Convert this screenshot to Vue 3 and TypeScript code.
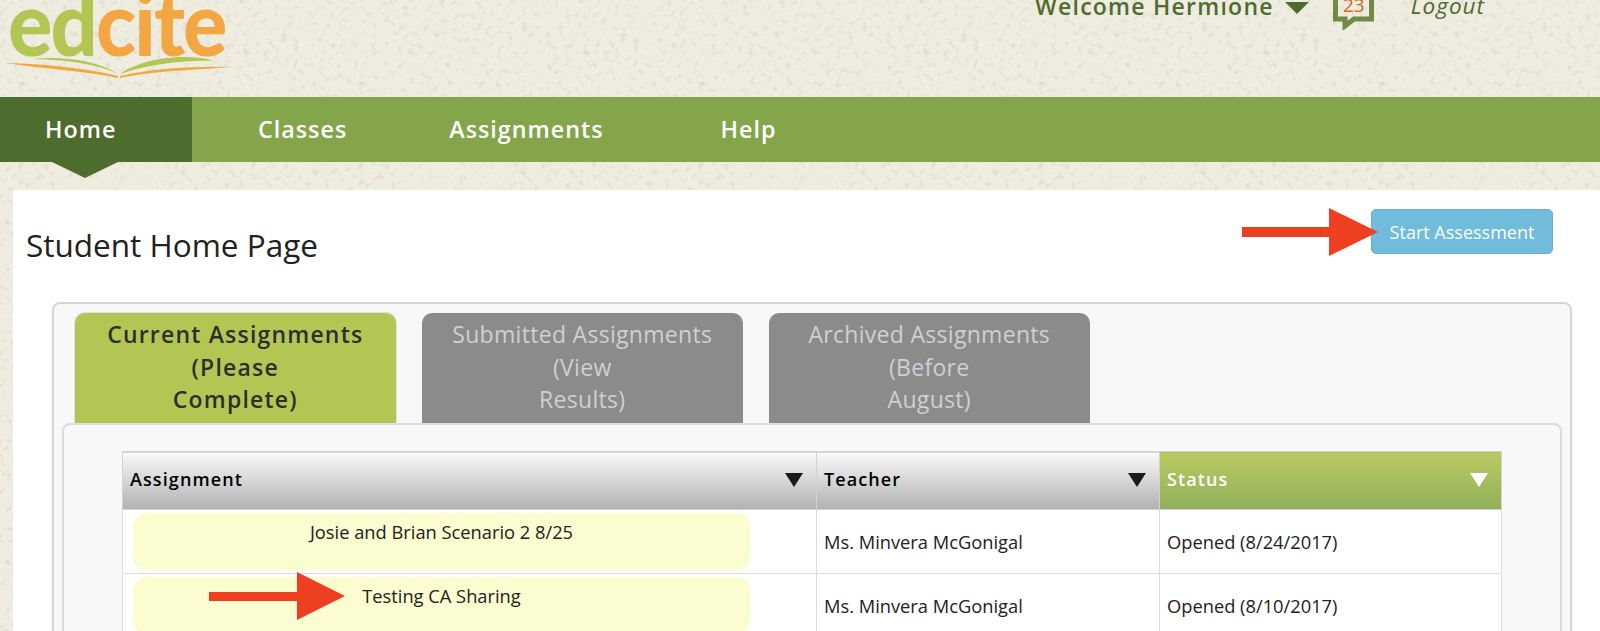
<script setup lang="ts">
interface Row {
  name: string
  teacher: string
  status: string
}

const tabs = [
  { lines: ['Current Assignments', '(Please', 'Complete)'], active: true },
  { lines: ['Submitted Assignments', '(View', 'Results)'], active: false },
  { lines: ['Archived Assignments', '(Before', 'August)'], active: false }
]

const navItems = ['Classes', 'Assignments', 'Help']

const rows: Row[] = [
  { name: 'Josie and Brian Scenario 2 8/25', teacher: 'Ms. Minvera McGonigal', status: 'Opened (8/24/2017)' },
  { name: 'Testing CA Sharing', teacher: 'Ms. Minvera McGonigal', status: 'Opened (8/10/2017)' }
]
</script>

<template>
  <div class="page">
    <header class="top">
      <div class="logo">
        <div class="logo-word"><span class="ed">ed</span><span class="cite">cite</span></div>
        <svg class="logo-book" width="240" height="24" viewBox="0 0 240 24">
          <path d="M118 18 C100 9 70 4 33 3 C60 0 97 4 118 18 Z" fill="#b3c653" />
          <path d="M120 18 C135 7 160 1 185 1 C195 1 205 2 214 5 C185 4 150 8 120 18 Z" fill="#b3c653" />
          <path d="M5 7 C50 8 90 13 118 20 V22 C85 15 45 13 5 7 Z" fill="#f3a742" />
          <path d="M120 20 C150 13 190 10 232 11 C195 14 150 15 120 22 Z" fill="#f3a742" />
        </svg>
      </div>
      <div class="user">
        <span class="welcome">Welcome Hermione</span>
        <span class="caret"></span>
        <svg class="bubble" width="41" height="30" viewBox="0 0 41 30">
          <path d="M2.5 -4 V19 H12 V26 L21 19 H38.5 V-4" fill="none" stroke="#6f8b45" stroke-width="5" />
        </svg>
        <span class="count">23</span>
        <span class="logout">Logout</span>
      </div>
    </header>

    <nav class="nav">
      <a class="nav-item home">Home</a>
      <a v-for="item in navItems" :key="item" class="nav-item" :class="item.toLowerCase()">{{ item }}</a>
    </nav>

    <main class="card">
      <div class="title-row">
        <h1>Student Home Page</h1>
        <button class="start">Start Assessment</button>
        <svg class="arrow arrow-start" width="136" height="48" viewBox="0 0 136 48">
          <path d="M0 19 H87 V0 L136 24 L87 48 V29 H0 Z" fill="#ee3f23" />
        </svg>
      </div>

      <section class="panel">
        <div class="tabs">
          <div v-for="tab in tabs" :key="tab.lines[0]" class="tab" :class="{ active: tab.active }">
            <div v-for="line in tab.lines" :key="line">{{ line }}</div>
          </div>
        </div>
        <div class="inner">
          <table class="grid">
            <colgroup>
              <col class="c1" />
              <col class="c2" />
              <col class="c3" />
            </colgroup>
            <thead>
              <tr>
                <th><span>Assignment</span><i class="sort"></i></th>
                <th><span>Teacher</span><i class="sort"></i></th>
                <th class="sorted"><span>Status</span><i class="sort"></i></th>
              </tr>
            </thead>
            <tbody>
              <tr v-for="(row, i) in rows" :key="row.name">
                <td class="name-cell">
                  <div class="pill">{{ row.name }}</div>
                  <svg v-if="i === 1" class="arrow arrow-row" width="136" height="48" viewBox="0 0 136 48">
                    <path d="M0 20 H88 V0 L136 24 L88 48 V29 H0 Z" fill="#ee3f23" />
                  </svg>
                </td>
                <td>{{ row.teacher }}</td>
                <td>{{ row.status }}</td>
              </tr>
            </tbody>
          </table>
        </div>
      </section>
    </main>
  </div>
</template>

<style>
html,
body {
  margin: 0;
  height: 100%;
  overflow: hidden;
}
</style>

<style scoped>
.page {
  height: 631px;
  overflow: hidden;
  font-family: "Open Sans", "Liberation Sans", sans-serif;
  color: #222;
  background-color: #efece0;
  background-image: url("data:image/svg+xml,%3Csvg xmlns='http://www.w3.org/2000/svg' width='340' height='340'%3E%3Cfilter id='n'%3E%3CfeTurbulence type='fractalNoise' baseFrequency='.16' numOctaves='4' seed='7'/%3E%3CfeColorMatrix values='0 0 0 0 .55 0 0 0 0 .53 0 0 0 0 .44 1.2 0 0 0 -.66'/%3E%3C/filter%3E%3Crect width='340' height='340' filter='url(%23n)'/%3E%3C/svg%3E");
}

.top {
  height: 97px;
  display: flex;
  justify-content: space-between;
  overflow: hidden;
}

.logo {
  position: relative;
  width: 240px;
  padding-left: 8px;
}

.logo-word {
  height: 56px;
  font-family: Lato, "Open Sans", sans-serif;
  font-weight: 900;
  font-size: 90px;
  line-height: 42px;
  letter-spacing: -2px;
  white-space: nowrap;
  transform: scaleX(0.92);
  transform-origin: left;
}

.ed {
  color: #b3c653;
}

.cite {
  color: #f3a742;
}

.logo-book {
  display: block;
  margin-left: -8px;
}

.user {
  position: relative;
  display: flex;
  align-items: flex-start;
  width: 565px;
  color: #4e6c2e;
}

.welcome {
  margin-top: -10px;
  font-size: 23px;
  line-height: 32px;
  font-weight: 600;
  letter-spacing: 1.25px;
  white-space: nowrap;
}

.caret {
  margin: 2px 0 0 11px;
  border-left: 12px solid transparent;
  border-right: 12px solid transparent;
  border-top: 12px solid #4e6c2e;
}

.bubble {
  margin-left: 24px;
}

.count {
  position: absolute;
  left: 308px;
  top: -5px;
  font-size: 19px;
  line-height: 20px;
  color: #d2691e;
}

.logout {
  margin: -10px 0 0 37px;
  font-size: 22.5px;
  line-height: 32px;
  font-style: italic;
  font-weight: 500;
  letter-spacing: 1px;
}

.nav {
  height: 65px;
  display: flex;
  background: #84a54a;
}

.nav-item {
  height: 65px;
  line-height: 65px;
  color: #fff;
  font-size: 23.3px;
  font-weight: 600;
  letter-spacing: 1px;
}

.home {
  position: relative;
  width: 192px;
  padding-left: 45px;
  box-sizing: border-box;
  background: #4e6c2e;
}

.home::after {
  content: "";
  position: absolute;
  left: 52px;
  top: 65px;
  border-left: 33px solid transparent;
  border-right: 33px solid transparent;
  border-top: 16px solid #4e6c2e;
}

.classes {
  margin-left: 66px;
}

.assignments {
  margin-left: 102px;
}

.help {
  margin-left: 117px;
}

.card {
  margin: 28px 0 0 13px;
  height: 441px;
  background: #fff;
  border-radius: 4px 0 0 0;
}

.title-row {
  position: relative;
  height: 112px;
}

h1 {
  margin: 0;
  padding: 33px 0 0 13px;
  font-size: 31.5px;
  line-height: 44px;
  font-weight: 400;
  color: #222;
}

.start {
  position: absolute;
  left: 1358px;
  top: 19px;
  width: 182px;
  height: 45px;
  padding: 0;
  background: #71bbdb;
  border: 1px solid #66b0d0;
  border-radius: 5px;
  color: #fff;
  font-family: inherit;
  font-size: 18px;
}

.arrow {
  position: absolute;
}

.arrow-start {
  left: 1229px;
  top: 18px;
}

.panel {
  margin-left: 39px;
  width: 1520px;
  height: 341px;
  box-sizing: border-box;
  border: 2px solid #d6d6d6;
  border-bottom: 0;
  border-radius: 8px 8px 0 0;
  background: #f8f8f8;
}

.tabs {
  display: flex;
  gap: 26.5px;
  height: 119px;
  padding: 9px 0 0 21px;
  box-sizing: border-box;
}

.tab {
  width: 320.5px;
  height: 110px;
  padding-top: 5px;
  box-sizing: border-box;
  border-radius: 10px 10px 0 0;
  background: #8b8b89;
  color: #d0d0d0;
  text-align: center;
  font-size: 23px;
  line-height: 32.5px;
  letter-spacing: 0.3px;
}

.tab.active {
  background: #b3c653;
  color: #2e2e2e;
  font-weight: 600;
  letter-spacing: 1.2px;
  box-shadow: 0 0 0 1px #e2e2e2;
}

.inner {
  margin-left: 8px;
  width: 1500px;
  height: 220px;
  padding: 26px 0 0 58px;
  box-sizing: border-box;
  border: 2px solid #dcdcdc;
  border-bottom: 0;
  border-radius: 8px 8px 0 0;
  background: #f8f8f8;
}

.grid {
  width: 1380px;
  table-layout: fixed;
  border-collapse: collapse;
  background: #fff;
}

.c1 {
  width: 694px;
}

.c2 {
  width: 343px;
}

th {
  height: 58px;
  padding: 0 13px 0 7px;
  box-sizing: border-box;
  border: 1px solid #d2d2d2;
  background: linear-gradient(#fafafa, #b1b1b1);
  color: #000;
  font-size: 18px;
  font-weight: 600;
  letter-spacing: 1.1px;
  text-align: left;
}

th span {
  float: left;
  margin-top: -3px;
}

.sort {
  float: right;
  margin-top: 3px;
  border-left: 9px solid transparent;
  border-right: 9px solid transparent;
  border-top: 14px solid #1a1a1a;
}

th.sorted {
  background: linear-gradient(#bbcb62, #90ae5a);
  color: #fff;
}

.sorted .sort {
  border-top-color: #fff;
}

td {
  height: 64px;
  padding: 0 7px;
  box-sizing: border-box;
  border: 1px solid #dcdcdc;
  font-size: 18.3px;
  color: #222;
}

.name-cell {
  position: relative;
  padding: 3px 0 3px 10px;
}

.pill {
  width: 617px;
  height: 57px;
  padding-top: 6px;
  box-sizing: border-box;
  border-radius: 14px;
  background: #fbfdd0;
  text-align: center;
}

.arrow-row {
  left: 86px;
  top: -2px;
}
</style>
